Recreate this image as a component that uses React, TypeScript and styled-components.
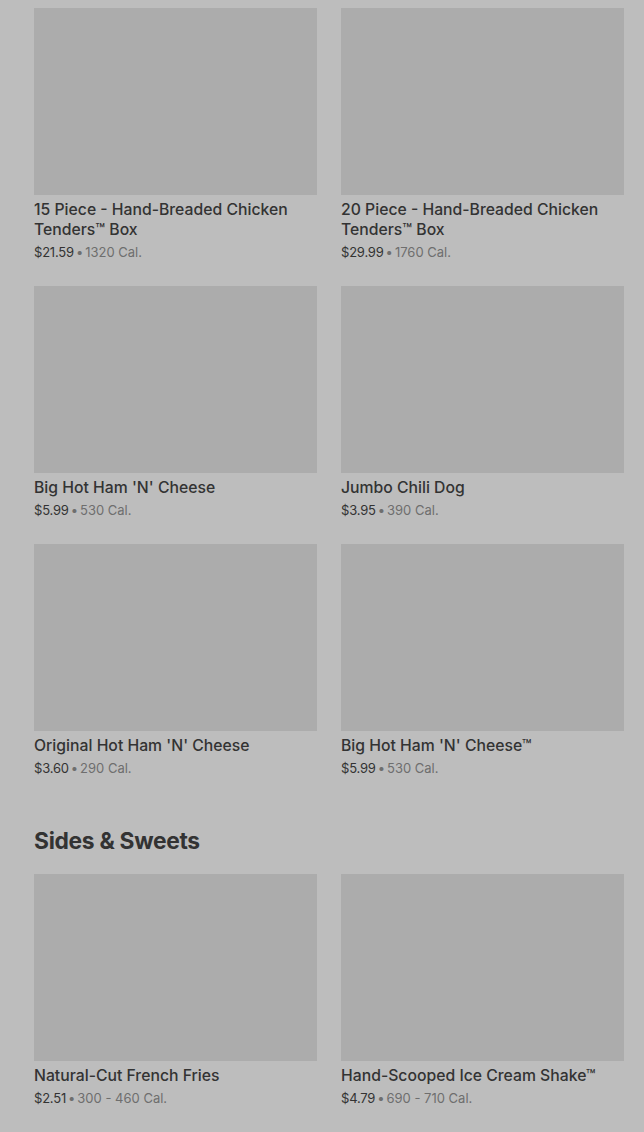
import React from 'react';
import styled, { createGlobalStyle } from 'styled-components';

const GlobalStyle = createGlobalStyle`
  html, body {
    margin: 0;
    padding: 0;
    background-color: #bdbdbd;
    font-family: Inter, "Noto Sans", "Liberation Sans", sans-serif;
  }
`;

const Page = styled.div`
  padding: 8px 20px 0 34px;
  display: flex;
  flex-direction: column;
  gap: 50px;
`;

const Section = styled.section`
  display: flex;
  flex-direction: column;
  gap: 19px;
`;

const Heading = styled.h2`
  margin: 0;
  font-size: 22.8px;
  line-height: 28px;
  font-weight: 700;
  letter-spacing: -0.3px;
  color: #333333;
`;

const Grid = styled.div`
  display: grid;
  grid-template-columns: 283px 283px;
  column-gap: 24px;
  row-gap: 25px;
`;

const Card = styled.div`
  display: flex;
  flex-direction: column;
`;

const Thumb = styled.div`
  height: 187px;
  background-color: #acacac;
  margin-bottom: 5px;
`;

const Title = styled.div`
  font-size: 15.75px;
  line-height: 20px;
  font-weight: 500;
  color: #333333;
`;

const Meta = styled.div`
  margin-top: 3px;
  height: 18px;
  font-size: 13px;
  line-height: 18px;
  color: #6e6e6e;
  white-space: nowrap;
`;

const Price = styled.span`
  color: #333333;
  letter-spacing: -0.2px;
`;

const Dot = styled.span`
  margin: 0 2px;
`;

type Item = { name: string; price: string; cal: string };

const mains: Item[] = [
  { name: '15 Piece - Hand-Breaded Chicken Tenders™ Box', price: '$21.59', cal: '1320 Cal.' },
  { name: '20 Piece - Hand-Breaded Chicken Tenders™ Box', price: '$29.99', cal: '1760 Cal.' },
  { name: "Big Hot Ham 'N' Cheese", price: '$5.99', cal: '530 Cal.' },
  { name: 'Jumbo Chili Dog', price: '$3.95', cal: '390 Cal.' },
  { name: "Original Hot Ham 'N' Cheese", price: '$3.60', cal: '290 Cal.' },
  { name: "Big Hot Ham 'N' Cheese™", price: '$5.99', cal: '530 Cal.' },
];

const sides: Item[] = [
  { name: 'Natural-Cut French Fries', price: '$2.51', cal: '300 - 460 Cal.' },
  { name: 'Hand-Scooped Ice Cream Shake™', price: '$4.79', cal: '690 - 710 Cal.' },
];

const MenuCard: React.FC<{ item: Item }> = ({ item }) => (
  <Card>
    <Thumb />
    <Title>{item.name}</Title>
    <Meta>
      <Price>{item.price}</Price>
      <Dot>•</Dot>
      {item.cal}
    </Meta>
  </Card>
);

const App: React.FC = () => (
  <>
    <GlobalStyle />
    <Page>
      <Grid>
        {mains.map((m, i) => (
          <MenuCard key={i} item={m} />
        ))}
      </Grid>
      <Section>
        <Heading>Sides &amp; Sweets</Heading>
        <Grid>
          {sides.map((m, i) => (
            <MenuCard key={i} item={m} />
          ))}
        </Grid>
      </Section>
    </Page>
  </>
);

export default App;
